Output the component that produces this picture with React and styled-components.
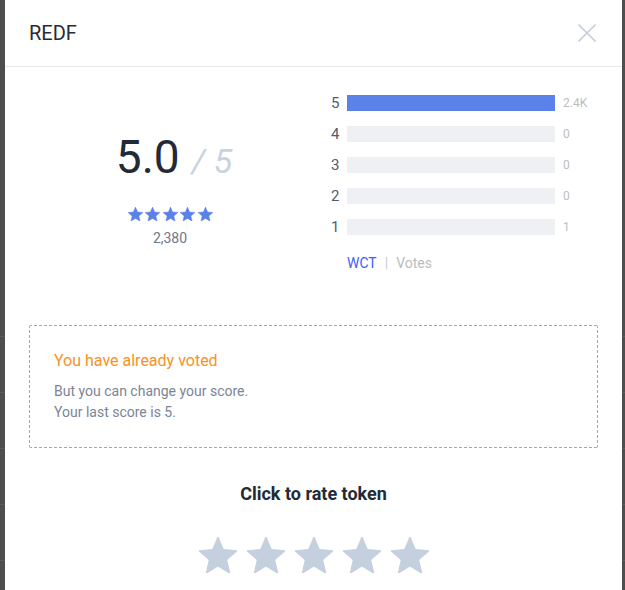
import React from 'react';
import styled, { createGlobalStyle } from 'styled-components';

const GlobalStyle = createGlobalStyle`
    html, body {
        margin: 0;
        padding: 0;
        height: 100%;
        overflow: hidden;
        background: #4e4e4e;
        font-family: Roboto, "Noto Sans", sans-serif;
    }
`;

const distribution = [
    { score: 5, value: '2.4K', share: 1 },
    { score: 4, value: '0', share: 0 },
    { score: 3, value: '0', share: 0 },
    { score: 2, value: '0', share: 0 },
    { score: 1, value: '1', share: 0 },
];

const dashH = 'repeating-linear-gradient(to right, #f59a0c 0 3px, transparent 3px 5px)';
const dashV = 'repeating-linear-gradient(to bottom, #f59a0c 0 3px, transparent 3px 5px)';

const Backdrop = styled.div`
    display: flex;
    height: 100vh;
    padding-left: 5px;
    box-sizing: border-box;
    background:
        repeating-linear-gradient(
            to bottom,
            transparent 0 55px,
            #5c5c5c 55px 56px
        ) 0 281px / 100% 100% no-repeat,
        #4e4e4e;
`;

const Modal = styled.div`
    width: 617px;
    flex-shrink: 0;
    background: #fff;
    min-height: 100%;
`;

const Header = styled.div`
    height: 66px;
    display: flex;
    align-items: center;
    justify-content: space-between;
    padding: 0 26px 0 24px;
    border-bottom: 1px solid #e6e8eb;
`;

const Title = styled.h2`
    margin: 0;
    font-size: 20px;
    line-height: 24px;
    font-weight: 400;
    color: #262b35;
`;

const CloseButton = styled.button`
    width: 18px;
    height: 18px;
    padding: 0;
    border: 0;
    background: none;
    cursor: pointer;
    display: flex;
`;

const Body = styled.div`
    padding: 28px 24px 0;
`;

const Summary = styled.div`
    display: grid;
    grid-template-columns: 282px 1fr;
    column-gap: 20px;
    align-items: start;
`;

const ScoreColumn = styled.div`
    display: flex;
    flex-direction: column;
    align-items: center;
    padding-top: 40px;
`;

const ScoreLine = styled.div`
    display: flex;
    align-items: baseline;
    margin-left: 8px;
    font-size: 46px;
    line-height: 44px;
    color: #232a37;
`;

const OutOf = styled.span`
    margin-left: 12px;
    font-size: 34px;
    font-style: italic;
    color: #c9d3df;
`;

const StarRow = styled.div`
    display: flex;
    justify-content: center;
    gap: ${p => p.gap}px;
    margin-top: ${p => p.offset}px;
`;

const VoteCount = styled.div`
    margin-top: 9px;
    font-size: 14px;
    line-height: 17px;
    color: #6e7787;
`;

const Bars = styled.div`
    display: flex;
    flex-direction: column;
    gap: 15px;
`;

const BarRow = styled.div`
    display: grid;
    grid-template-columns: 16px 208px 1fr;
    align-items: center;
    height: 16px;
`;

const BarLabel = styled.span`
    font-size: 15px;
    line-height: 16px;
    color: #545c6b;
`;

const Track = styled.div`
    height: 16px;
    background: #eef0f4;
`;

const Fill = styled.div`
    height: 100%;
    background: #5b82e8;
`;

const BarValue = styled.span`
    padding-left: 8px;
    font-size: 12px;
    line-height: 16px;
    color: #bdbdbd;
`;

const Legend = styled.div`
    display: flex;
    margin-top: 18px;
    padding-left: 16px;
    font-size: 14px;
    line-height: 20px;
    color: #bcbcbc;
`;

const LegendActive = styled.span`
    color: #4160f6;
`;

const LegendSep = styled.span`
    margin: 0 8px;
    color: #c7ccd4;
`;

const Notice = styled.div`
    margin-top: 52px;
    padding: 25px;
    border-radius: 2px;
    background:
        ${dashH} top left / 100% 1px no-repeat,
        ${dashH} bottom left / 100% 1px no-repeat,
        ${dashV} top left / 1px 100% no-repeat,
        ${dashV} top right / 1px 100% no-repeat;
`;

const NoticeTitle = styled.div`
    font-size: 16px;
    line-height: 22px;
    color: #f7921f;
`;

const NoticeText = styled.div`
    margin-top: 9px;
    font-size: 14px;
    line-height: 21px;
    color: #7b8597;
`;

const RateTitle = styled.div`
    margin-top: 34px;
    text-align: center;
    font-size: 18px;
    line-height: 24px;
    font-weight: 700;
    color: #222a36;
`;

const StarIcon = ({ size, color }) => (
    <svg width={size} height={size * 0.96} viewBox="2 2 20 19.2">
        <path
            fill={color}
            stroke={color}
            strokeWidth="0.6"
            strokeLinejoin="round"
            d="M12 17.27L18.18 21l-1.64-7.03L22 9.24l-7.19-.61L12 2 9.19 8.63 2 9.24l5.46 4.73L5.82 21z"
        />
    </svg>
);

const App = () => {
    return (
        <>
            <GlobalStyle />
            <Backdrop>
                <Modal>
                    <Header>
                        <Title>REDF</Title>
                        <CloseButton aria-label="close">
                            <svg width="18" height="18" viewBox="0 0 18 18">
                                <path d="M0.5 0.5L17.5 17.5M17.5 0.5L0.5 17.5" stroke="#c6d0dd" strokeWidth="1.6" />
                            </svg>
                        </CloseButton>
                    </Header>
                    <Body>
                        <Summary>
                            <ScoreColumn>
                                <ScoreLine>
                                    5.0<OutOf>/ 5</OutOf>
                                </ScoreLine>
                                <StarRow gap={2.5} offset={24}>
                                    {[0, 1, 2, 3, 4].map(i => (
                                        <StarIcon key={i} size={15} color="#5b82e8" />
                                    ))}
                                </StarRow>
                                <VoteCount>2,380</VoteCount>
                            </ScoreColumn>
                            <div>
                                <Bars>
                                    {distribution.map(row => (
                                        <BarRow key={row.score}>
                                            <BarLabel>{row.score}</BarLabel>
                                            <Track>
                                                <Fill style={{ width: `${row.share * 100}%` }} />
                                            </Track>
                                            <BarValue>{row.value}</BarValue>
                                        </BarRow>
                                    ))}
                                </Bars>
                                <Legend>
                                    <LegendActive>WCT</LegendActive>
                                    <LegendSep>|</LegendSep>
                                    <span>Votes</span>
                                </Legend>
                            </div>
                        </Summary>
                        <Notice>
                            <NoticeTitle>You have already voted</NoticeTitle>
                            <NoticeText>
                                But you can change your score.
                                <br />
                                Your last score is 5.
                            </NoticeText>
                        </Notice>
                        <RateTitle>Click to rate token</RateTitle>
                        <StarRow gap={10} offset={31}>
                            {[0, 1, 2, 3, 4].map(i => (
                                <StarIcon key={i} size={38} color="#c5d0df" />
                            ))}
                        </StarRow>
                    </Body>
                </Modal>
            </Backdrop>
        </>
    );
};

export default App;
